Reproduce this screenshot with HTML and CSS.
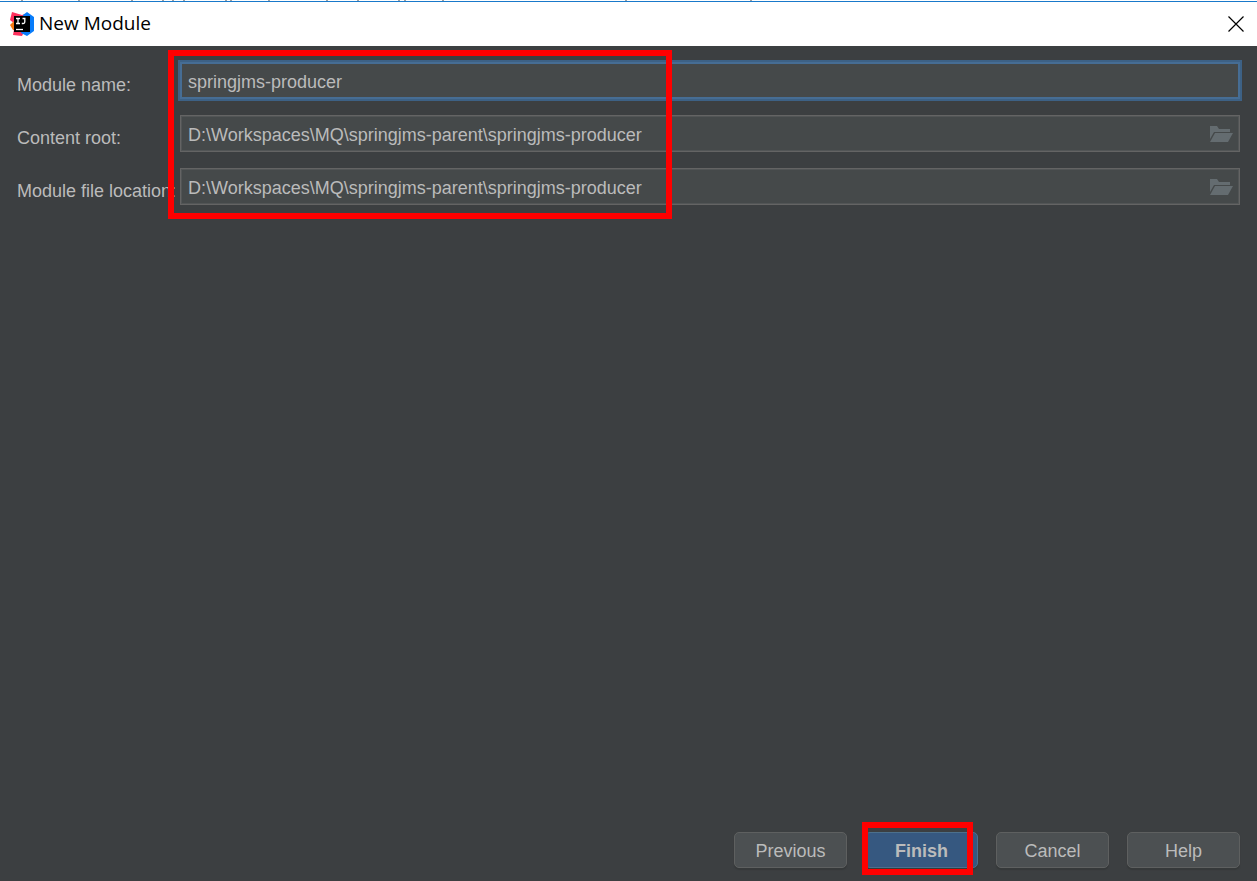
FILE: index.html
```
<!DOCTYPE html>
<html lang="en">
<head>
    <meta charset="UTF-8">
    <meta name="viewport" content="width=device-width, initial-scale=1.0">
    <title>New Module</title>
    <link rel="stylesheet" href="styles.css">
</head>
<body>

    <!-- Edge of the window behind -->
    <div class="behind"></div>

    <!-- Title bar -->
    <header class="title-bar">
        <svg class="logo" viewBox="0 0 24 24" aria-hidden="true">
            <path d="M2 0 L12 3 L18 1 L20 8 L12 24 L3 23 L5 12 L0 8 Z" fill="#fe315d"/>
            <path d="M0 13 L5 8 L6 18 L3 18 Z" fill="#f97a12"/>
            <path d="M13 3 L17 0 L24 5 L24 19 L17 24 L11 21 Z" fill="#087cfa"/>
            <rect x="4" y="4" width="16" height="16" fill="#000"/>
            <path d="M6 6.500h4M8 6.500v5M6 11.500h4M12.500 6.500h3M14.800 6.500v3.500q0 1.500-1.500 1.500h-1.500" fill="none" stroke="#fff" stroke-width="1.300"/>
            <path d="M6 17.500h7" stroke="#fff" stroke-width="1.300"/>
        </svg>
        <h1>New Module</h1>
        <button type="button" class="close" aria-label="Close">
            <svg viewBox="0 0 16 16"><path d="M.5 .5l15 15M15.500 .5l-15 15" stroke="#000" stroke-width="1.200"/></svg>
        </button>
    </header>

    <!-- Module settings -->
    <form class="dialog">
        <div class="fields">
            <label for="moduleName">Module name:</label>
            <div class="field">
                <input type="text" id="moduleName" class="active" value="springjms-producer">
            </div>

            <label for="contentRoot">Content root:</label>
            <div class="field">
                <input type="text" id="contentRoot" value="D:\Workspaces\MQ\springjms-parent\springjms-producer">
                <button type="button" class="browse" aria-label="Browse content root">
                    <svg viewBox="0 0 24 18"><path d="M1 1h7l2 3h11v3H5L1 14z"/><path d="M6 8h18l-5 9H1z"/></svg>
                </button>
            </div>

            <label for="fileLocation">Module file location:</label>
            <div class="field">
                <input type="text" id="fileLocation" value="D:\Workspaces\MQ\springjms-parent\springjms-producer">
                <button type="button" class="browse" aria-label="Browse module file location">
                    <svg viewBox="0 0 24 18"><path d="M1 1h7l2 3h11v3H5L1 14z"/><path d="M6 8h18l-5 9H1z"/></svg>
                </button>
            </div>

            <div class="mark mark-fields"></div>
        </div>

        <!-- Buttons -->
        <div class="actions">
            <button type="button">Previous</button>
            <div class="finish">
                <button type="submit" class="primary">Finish</button>
                <div class="mark mark-finish"></div>
            </div>
            <button type="button">Cancel</button>
            <button type="button">Help</button>
        </div>
    </form>

</body>
</html>
```
FILE: styles.css
```
* {
    box-sizing: border-box;
}

body {
    margin: 0;
    min-height: 100vh;
    display: flex;
    flex-direction: column;
    background-color: #3c3f41;
    color: #bbbbbb;
    font-family: "Liberation Sans", Arial, sans-serif;
    font-size: 18px;
}

button,
input {
    font: inherit;
    color: inherit;
}

.behind {
    height: 1px;
    background-color: white;
}

/* Bottoms of the letters that show above the window */
.behind::before {
    content: "";
    display: block;
    width: 2px;
    height: 1px;
    margin-left: 21px;
    background-color: #a0a0a0;
    box-shadow: 57px 0 #a0a0a0, 110px 0 #a0a0a0, 141px 0 #a0a0a0,
        151px 0 #a0a0a0, 162px 0 #a0a0a0, 204px 0 #a0a0a0,
        209px 0 #a0a0a0, 247px 0 #a0a0a0, 305px 0 #a0a0a0,
        336px 0 #a0a0a0, 377px 0 #a0a0a0, 383px 0 #a0a0a0,
        421px 0 #a0a0a0, 604px 0 #a0a0a0, 729px 0 #a0a0a0;
}

/* Title bar */
.title-bar {
    height: 45px;
    padding: 0 13px 0 10px;
    display: flex;
    align-items: center;
    background-color: white;
    border-top: 1px solid #1979ca;
    color: black;
}

.logo {
    width: 24px;
    height: 24px;
}

.title-bar h1 {
    flex: 1;
    margin: 0 0 2px 5px;
    font-family: "Open Sans", sans-serif;
    font-size: 19px;
    font-weight: normal;
}

.close {
    width: 16px;
    height: 16px;
    padding: 0;
    border: none;
    background: none;
}

.close svg,
.browse svg {
    display: block;
    width: 100%;
}

/* Form */
.dialog {
    flex: 1;
    display: flex;
    flex-direction: column;
    justify-content: space-between;
    padding: 16px 17px 13px;
}

.fields {
    position: relative;
    display: grid;
    grid-template-columns: 163px 1fr;
    row-gap: 16px;
    align-items: center;
}

label {
    padding-top: 9px;
    white-space: nowrap;
}

.field {
    display: flex;
    align-items: center;
    height: 37px;
    background-color: #45494a;
    border: 1px solid #646464;
    box-shadow: inset 0 0 0 1px #525556;
}

.field input {
    flex: 1;
    min-width: 0;
    height: 100%;
    padding: 3px 7px 0;
    border: none;
    outline: none;
    background: none;
}

.field:has(.active) {
    border: 2px solid #466d94;
    box-shadow: 0 0 0 2px #3d6185;
}

.field .active {
    padding: 3px 6px 0;
}

.browse {
    width: 24px;
    margin-right: 6px;
    padding: 0;
    border: none;
    background: none;
    fill: #646c70;
}

/* Buttons */
.actions {
    display: flex;
    justify-content: flex-end;
    gap: 18px;
}

.actions button {
    width: 113px;
    height: 36px;
    padding: 3px 0 0;
    background-color: #4c5052;
    border: 1px solid #5e6060;
    border-radius: 5px;
    box-shadow: 0 2px 1px #36393a;
}

.actions .primary {
    background-color: #365880;
    border-color: #4c708c;
    font-weight: bold;
}

.finish {
    position: relative;
}

/* Red frames */
.mark {
    position: absolute;
    border: 6px solid red;
    pointer-events: none;
}

.mark-fields {
    top: -12px;
    bottom: -14px;
    left: 151px;
    width: 504px;
}

.mark-finish {
    top: -10px;
    right: 5px;
    bottom: -7px;
    left: -3px;
}
```
